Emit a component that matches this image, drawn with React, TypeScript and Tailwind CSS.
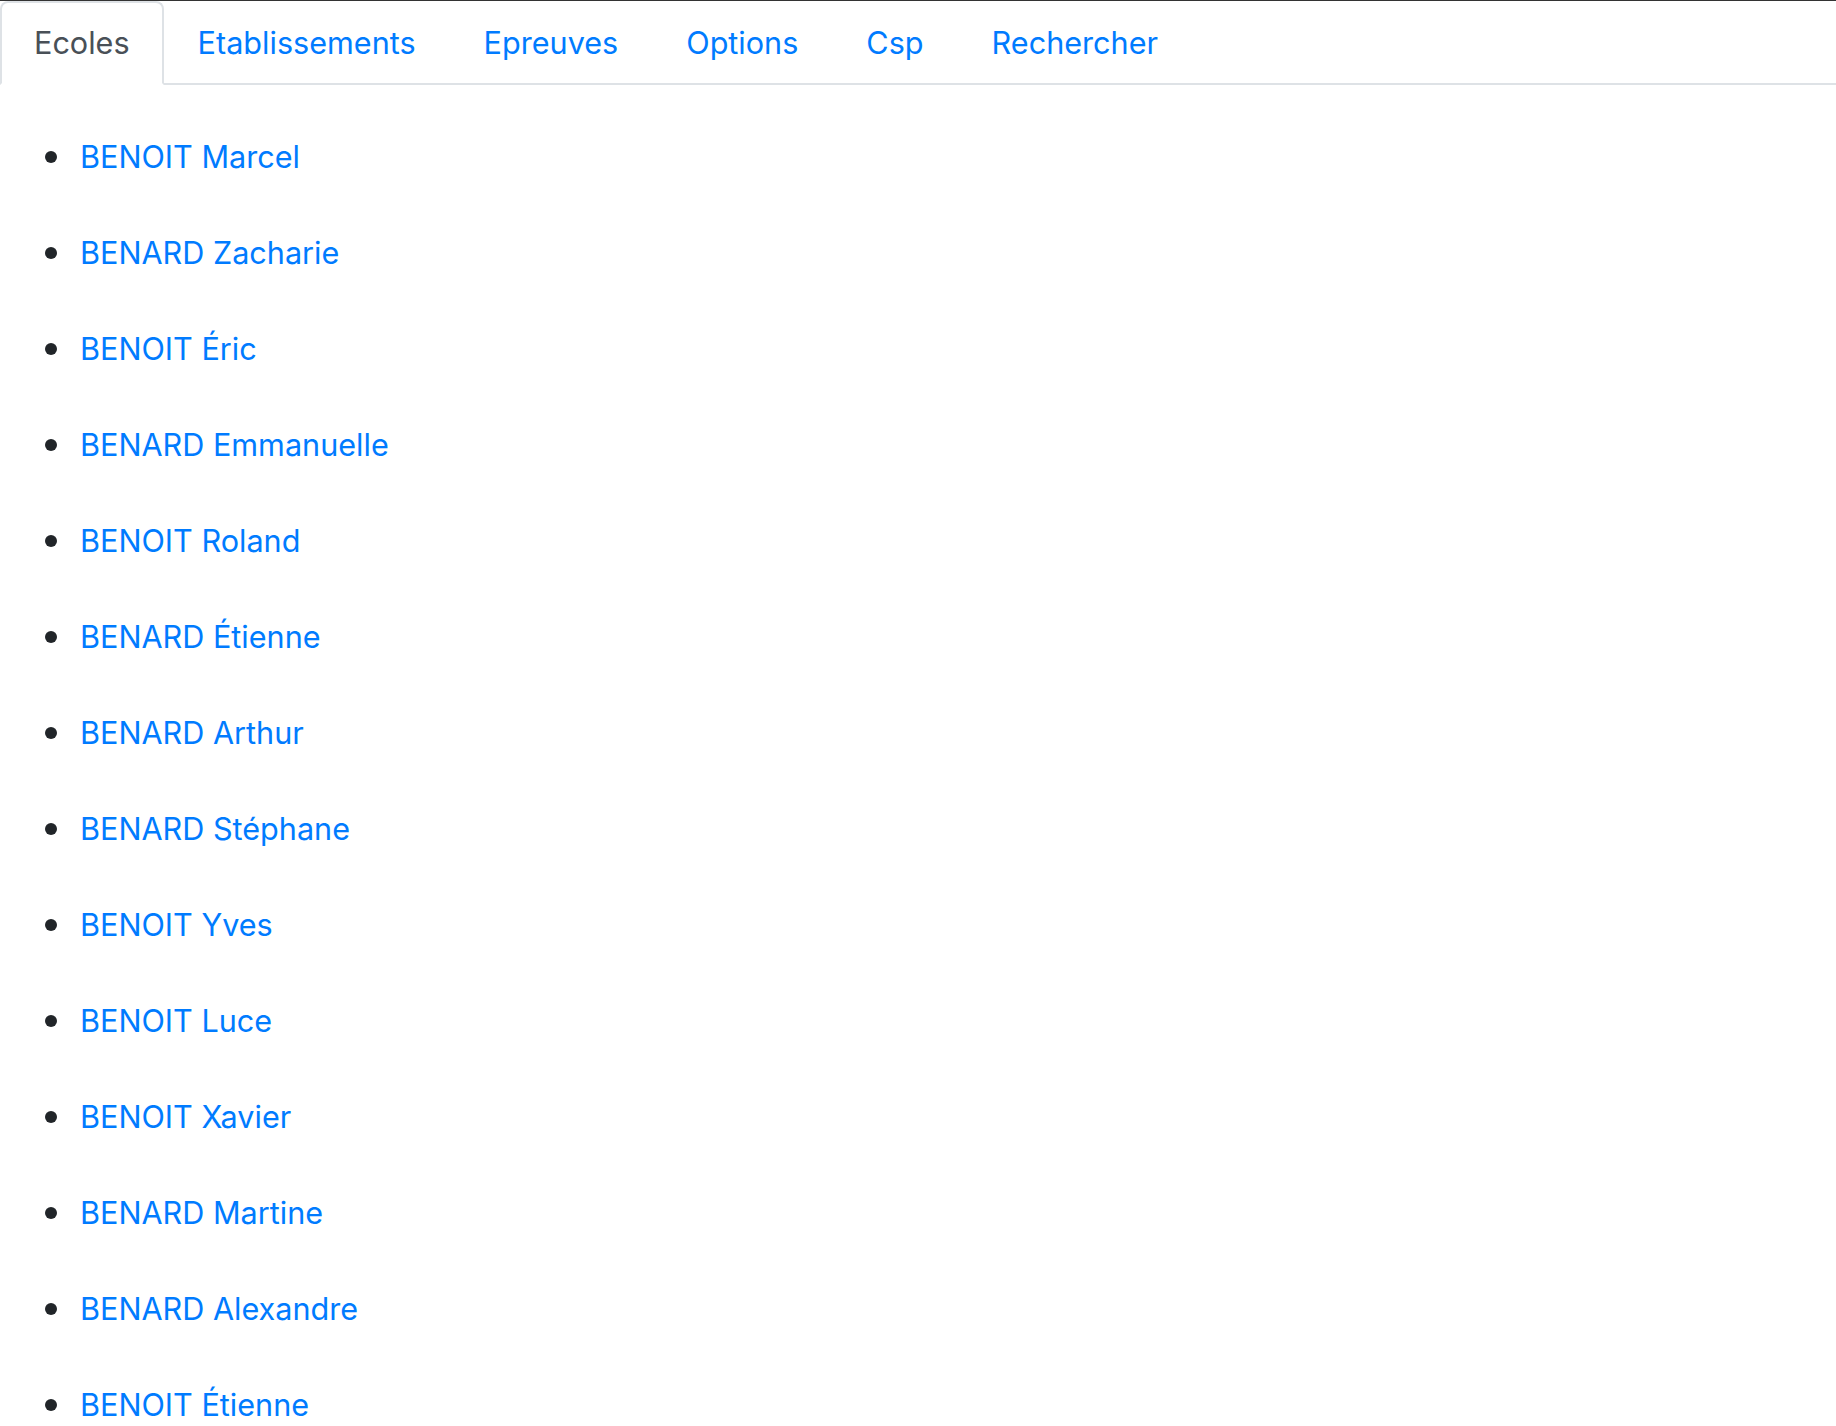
const tabs = ['Ecoles', 'Etablissements', 'Epreuves', 'Options', 'Csp', 'Rechercher']

const names = [
  'BENOIT Marcel',
  'BENARD Zacharie',
  'BENOIT Éric',
  'BENARD Emmanuelle',
  'BENOIT Roland',
  'BENARD Étienne',
  'BENARD Arthur',
  'BENARD Stéphane',
  'BENOIT Yves',
  'BENOIT Luce',
  'BENOIT Xavier',
  'BENARD Martine',
  'BENARD Alexandre',
  'BENOIT Étienne',
]

export default function App() {
  return (
    <div
      className="h-[1426px] overflow-hidden bg-white text-[#212529] text-[30.6px] leading-[48px]"
      style={{ fontFamily: 'Inter, "Noto Sans", sans-serif' }}
    >
      <div className="h-px bg-[#333]" />

      {/* Tabs */}
      <ul className="flex border-b-2 border-[#dee2e6]">
        {tabs.map((tab, i) => (
          <li key={tab} className="-mb-[2px]">
            <a
              href="#"
              className={
                i === 0
                  ? 'block px-8 py-4 border-2 border-[#dee2e6] border-b-white rounded-t-lg bg-white text-[#495057]'
                  : 'block px-8 py-4 border-2 border-transparent text-[#007bff]'
              }
            >
              {tab}
            </a>
          </li>
        ))}
      </ul>

      {/* Names */}
      <ul className="mt-[24px]">
        {names.map((name, i) => (
          <li key={i} className="flex items-center py-6">
            <span className="ml-[45px] mr-[23px] h-[12px] w-[12px] shrink-0 rounded-full bg-[#212529]" />
            <a href="#" className="text-[#007bff]">
              {name}
            </a>
          </li>
        ))}
      </ul>
    </div>
  )
}
